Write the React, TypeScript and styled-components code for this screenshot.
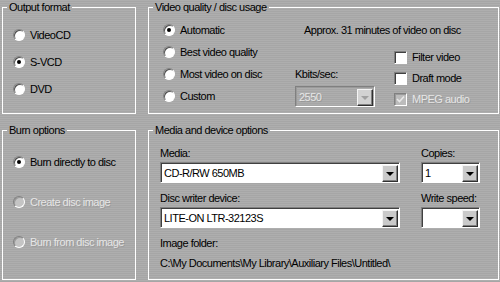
import React from 'react'
import styled, { createGlobalStyle } from 'styled-components'

const GlobalStyle = createGlobalStyle`
  html, body {
    margin: 0;
    padding: 0;
  }
  body {
    width: 500px;
    height: 282px;
    overflow: hidden;
    background: repeating-linear-gradient(to bottom, #aeaeae 0 1px, #a6a6a6 1px 2px);
    font-family: "Liberation Sans", Arial, sans-serif;
    font-size: 11px;
    letter-spacing: -0.5px;
    color: #000;
  }
`

const Window = styled.div`
  display: grid;
  grid-template-columns: 134px 351px;
  grid-template-rows: 114px 157px;
  column-gap: 12px;
  row-gap: 9px;
  padding: 0 2px;
`

const Group = styled.fieldset`
  margin: 0;
  padding: 0;
  border: 1px solid #fff;
  min-width: 0;
`

const Legend = styled.legend`
  margin-left: 4px;
  padding: 0 2px;
  line-height: 14px;
  height: 14px;
`

const Stack = styled.div<{ $top: number; $left: number; $gap: number }>`
  display: flex;
  flex-direction: column;
  gap: ${p => p.$gap}px;
  padding: ${p => p.$top}px 0 0 ${p => p.$left}px;
`

const Row = styled.label<{ $gap?: number }>`
  display: flex;
  align-items: center;
  gap: ${p => p.$gap ?? 5}px;
  height: 14px;
  line-height: 14px;
  white-space: nowrap;
`

const Text = styled.span<{ $disabled?: boolean }>`
  color: ${p => (p.$disabled ? '#e6e6e6' : '#000')};
  text-shadow: ${p => (p.$disabled ? '1px 1px 0 rgba(120,120,120,0.35)' : 'none')};
`

const RadioCircle = styled.span<{ $checked?: boolean; $disabled?: boolean }>`
  position: relative;
  box-sizing: border-box;
  width: 12px;
  height: 12px;
  border-radius: 50%;
  flex: none;
  background: ${p => (p.$disabled ? '#c4c4c4' : '#fff')};
  border: 1px solid;
  border-color: #808080 #fff #fff #808080;
  box-shadow: inset 1px 1px 0 ${p => (p.$disabled ? '#9a9a9a' : '#505050')};

  &::after {
    content: '';
    display: ${p => (p.$checked ? 'block' : 'none')};
    position: absolute;
    left: 3px;
    top: 3px;
    width: 4px;
    height: 4px;
    border-radius: 50%;
    background: #000;
  }
`

const CheckSquare = styled.span<{ $disabled?: boolean }>`
  box-sizing: border-box;
  width: 13px;
  height: 13px;
  flex: none;
  display: flex;
  align-items: center;
  justify-content: center;
  background: ${p => (p.$disabled ? '#bcbcbc' : '#fff')};
  border: 1px solid;
  border-color: #808080 #fff #fff #808080;
  box-shadow: inset 1px 1px 0 ${p => (p.$disabled ? '#9a9a9a' : '#404040')};
`

const Radio = ({ label, checked, disabled }: { label: string; checked?: boolean; disabled?: boolean }) => (
  <Row>
    <RadioCircle $checked={checked} $disabled={disabled} />
    <Text $disabled={disabled}>{label}</Text>
  </Row>
)

const Checkbox = ({ label, checked, disabled }: { label: string; checked?: boolean; disabled?: boolean }) => (
  <Row>
    <CheckSquare $disabled={disabled}>
      {checked && (
        <svg width="9" height="9" viewBox="0 0 9 9">
          <path d="M1 4 L3.5 6.5 L8 1.5" stroke={disabled ? '#e8e8e8' : '#000'} strokeWidth="1.6" fill="none" />
        </svg>
      )}
    </CheckSquare>
    <Text $disabled={disabled}>{label}</Text>
  </Row>
)

const Field = styled.div<{ $disabled?: boolean }>`
  box-sizing: border-box;
  height: 21px;
  display: flex;
  align-items: center;
  justify-content: space-between;
  background: ${p => (p.$disabled ? 'transparent' : '#fff')};
  border: 1px solid;
  border-color: #808080 #fff #fff #808080;
  box-shadow: inset 1px 1px 0 ${p => (p.$disabled ? '#9a9a9a' : '#404040')};
  padding: 1px 1px 0 3px;
  line-height: 14px;
`

const ArrowButton = styled.span<{ $disabled?: boolean }>`
  box-sizing: border-box;
  width: 16px;
  height: 17px;
  display: flex;
  align-items: center;
  justify-content: center;
  background: ${p => (p.$disabled ? '#d2d2d2' : '#cacaca')};
  border: 1px solid;
  border-color: #f4f4f4 #303030 #303030 #f4f4f4;
  box-shadow: inset -1px -1px 0 #808080;

  &::after {
    content: '';
    margin-top: 1px;
    border-left: 4px solid transparent;
    border-right: 4px solid transparent;
    border-top: 4px solid ${p => (p.$disabled ? '#a0a0a0' : '#000')};
  }
`

const Combo = ({ value, disabled }: { value: string; disabled?: boolean }) => (
  <Field $disabled={disabled}>
    <Text $disabled={disabled}>{value}</Text>
    <ArrowButton $disabled={disabled} />
  </Field>
)

const QualityBody = styled.div`
  display: flex;
  padding-left: 14px;
`

const RadioColumn = styled(Stack)`
  width: 132px;
  padding-left: 0;
`

const Side = styled.div`
  display: flex;
  flex-direction: column;
  padding-top: 9px;
`

const Approx = styled.div`
  margin-left: 9px;
  height: 14px;
  line-height: 14px;
  white-space: nowrap;
`

const SideRow = styled.div`
  display: flex;
`

const Kbits = styled.div`
  width: 80px;
  margin-top: 30px;
  display: flex;
  flex-direction: column;
  gap: 5px;
`

const Label = styled.div`
  height: 14px;
  line-height: 14px;
  white-space: nowrap;
`

const CheckColumn = styled.div`
  display: flex;
  flex-direction: column;
  gap: 7px;
  margin: 13px 0 0 19px;
`

const MediaGrid = styled.div`
  display: grid;
  grid-template-columns: 240px 59px;
  column-gap: 21px;
  padding: 9px 0 0 11px;
`

const Cell = styled.div<{ $span?: boolean }>`
  display: flex;
  flex-direction: column;
  gap: 2px;
  margin-bottom: 8px;
  grid-column: ${p => (p.$span ? '1 / 3' : 'auto')};
`

const FolderBlock = styled(Cell)`
  gap: 6px;
`

export default function App() {
  return (
    <>
      <GlobalStyle />
      <Window>
        <Group>
          <Legend>Output format</Legend>
          <Stack $top={14} $left={10} $gap={13}>
            <Radio label="VideoCD" />
            <Radio label="S-VCD" checked />
            <Radio label="DVD" />
          </Stack>
        </Group>

        <Group>
          <Legend>Video quality / disc usage</Legend>
          <QualityBody>
            <RadioColumn $top={9} $left={0} $gap={8}>
              <Radio label="Automatic" checked />
              <Radio label="Best video quality" />
              <Radio label="Most video on disc" />
              <Radio label="Custom" />
            </RadioColumn>
            <Side>
              <Approx>Approx. 31 minutes of video on disc</Approx>
              <SideRow>
                <Kbits>
                  <Label>Kbits/sec:</Label>
                  <Combo value="2550" disabled />
                </Kbits>
                <CheckColumn>
                  <Checkbox label="Filter video" />
                  <Checkbox label="Draft mode" />
                  <Checkbox label="MPEG audio" checked disabled />
                </CheckColumn>
              </SideRow>
            </Side>
          </QualityBody>
        </Group>

        <Group>
          <Legend>Burn options</Legend>
          <Stack $top={18} $left={10} $gap={26}>
            <Radio label="Burn directly to disc" checked />
            <Radio label="Create disc image" disabled />
            <Radio label="Burn from disc image" disabled />
          </Stack>
        </Group>

        <Group>
          <Legend>Media and device options</Legend>
          <MediaGrid>
            <Cell>
              <Label>Media:</Label>
              <Combo value="CD-R/RW 650MB" />
            </Cell>
            <Cell>
              <Label>Copies:</Label>
              <Combo value="1" />
            </Cell>
            <Cell>
              <Label>Disc writer device:</Label>
              <Combo value="LITE-ON LTR-32123S" />
            </Cell>
            <Cell>
              <Label>Write speed:</Label>
              <Combo value="" />
            </Cell>
            <FolderBlock $span>
              <Label>Image folder:</Label>
              <Label>{'C:\\My Documents\\My Library\\Auxiliary Files\\Untitled\\'}</Label>
            </FolderBlock>
          </MediaGrid>
        </Group>
      </Window>
    </>
  )
}
